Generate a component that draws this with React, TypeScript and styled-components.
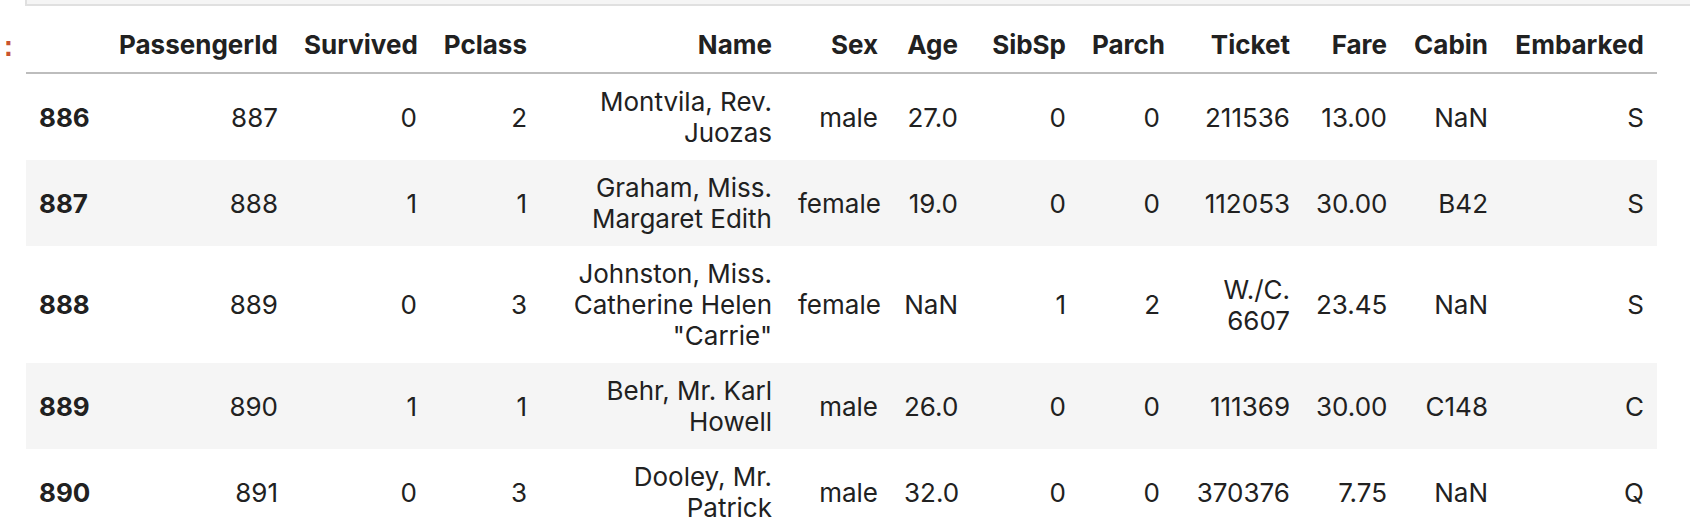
import React from 'react';
import styled, { createGlobalStyle } from 'styled-components';

type Passenger = {
  index: number;
  passengerId: number;
  survived: number;
  pclass: number;
  name: string;
  sex: string;
  age: string;
  sibSp: number;
  parch: number;
  ticket: string;
  fare: string;
  cabin: string;
  embarked: string;
};

const COLUMNS = ['PassengerId', 'Survived', 'Pclass', 'Name', 'Sex', 'Age', 'SibSp', 'Parch', 'Ticket', 'Fare', 'Cabin', 'Embarked'];

/** column widths measured from the notebook output (index column first) */
const WIDTHS = [77, 188, 139, 110, 245, 106, 80, 108, 94, 130, 97, 101, 156];

const ROWS: Passenger[] = [
  { index: 886, passengerId: 887, survived: 0, pclass: 2, name: 'Montvila, Rev. Juozas', sex: 'male', age: '27.0', sibSp: 0, parch: 0, ticket: '211536', fare: '13.00', cabin: 'NaN', embarked: 'S' },
  { index: 887, passengerId: 888, survived: 1, pclass: 1, name: 'Graham, Miss. Margaret Edith', sex: 'female', age: '19.0', sibSp: 0, parch: 0, ticket: '112053', fare: '30.00', cabin: 'B42', embarked: 'S' },
  { index: 888, passengerId: 889, survived: 0, pclass: 3, name: 'Johnston, Miss. Catherine Helen "Carrie"', sex: 'female', age: 'NaN', sibSp: 1, parch: 2, ticket: 'W./C. 6607', fare: '23.45', cabin: 'NaN', embarked: 'S' },
  { index: 889, passengerId: 890, survived: 1, pclass: 1, name: 'Behr, Mr. Karl Howell', sex: 'male', age: '26.0', sibSp: 0, parch: 0, ticket: '111369', fare: '30.00', cabin: 'C148', embarked: 'C' },
  { index: 890, passengerId: 891, survived: 0, pclass: 3, name: 'Dooley, Mr. Patrick', sex: 'male', age: '32.0', sibSp: 0, parch: 0, ticket: '370376', fare: '7.75', cabin: 'NaN', embarked: 'Q' },
];

const GlobalStyle = createGlobalStyle`
  html, body {
    margin: 0;
    padding: 0;
    background: #ffffff;
  }
`;

export default function App() {
  return (
    <React.Fragment>
      <GlobalStyle />
      <Notebook>
        {/* previous cell's input box, cut off at the top */}
        <InputStub />
        <OutputRow>
          <Prompt>:</Prompt>
          <DataFrame>
            <colgroup>
              {WIDTHS.map((w, i) => (
                <col key={i} style={{ width: w }} />
              ))}
            </colgroup>
            <thead>
              <tr>
                <HeadCell />
                {COLUMNS.map(col => (
                  <HeadCell key={col}>{col}</HeadCell>
                ))}
              </tr>
            </thead>
            <tbody>
              {ROWS.map((row, i) => (
                <Row key={row.index} $striped={i % 2 === 1}>
                  <IndexCell>{row.index}</IndexCell>
                  <Cell>{row.passengerId}</Cell>
                  <Cell>{row.survived}</Cell>
                  <Cell>{row.pclass}</Cell>
                  <Cell>{row.name}</Cell>
                  <Cell>{row.sex}</Cell>
                  <Cell>{row.age}</Cell>
                  <Cell>{row.sibSp}</Cell>
                  <Cell>{row.parch}</Cell>
                  <Cell>{row.ticket}</Cell>
                  <Cell>{row.fare}</Cell>
                  <Cell>{row.cabin}</Cell>
                  <Cell>{row.embarked}</Cell>
                </Row>
              ))}
            </tbody>
          </DataFrame>
        </OutputRow>
      </Notebook>
    </React.Fragment>
  );
}

const Notebook = styled.div`
  width: 1690px;
  font-family: Inter, 'Noto Sans', 'Liberation Sans', sans-serif;
  color: #212121;
`;

const InputStub = styled.div`
  margin-left: 25px;
  height: 4px;
  background: #f5f5f5;
  border-left: 2px solid #e0e0e0;
  border-bottom: 2px solid #e0e0e0;
`;

const OutputRow = styled.div`
  display: flex;
  align-items: flex-start;
`;

const Prompt = styled.div`
  flex: none;
  width: 26px;
  padding-top: 27px;
  font-family: 'Liberation Mono', monospace;
  font-weight: 700;
  font-size: 28px;
  line-height: 31px;
  color: #c9532f;
`;

const DataFrame = styled.table`
  margin-top: 11px;
  table-layout: fixed;
  width: 1631px;
  border-collapse: collapse;
  border-spacing: 0;
  font-size: 26px;
  line-height: 31px;
`;

const HeadCell = styled.th`
  padding: 12px 13px 12px 13px;
  text-align: right;
  vertical-align: bottom;
  font-weight: 700;
  border-bottom: 2px solid #bdbdbd;
  white-space: nowrap;
`;

const Row = styled.tr<{ $striped: boolean }>`
  background: ${p => (p.$striped ? '#f5f5f5' : '#ffffff')};
`;

const Cell = styled.td`
  padding: 12px 13px;
  text-align: right;
  vertical-align: middle;
  font-weight: 400;
`;

const IndexCell = styled.th`
  padding: 12px 13px;
  text-align: left;
  vertical-align: middle;
  font-weight: 700;
`;
